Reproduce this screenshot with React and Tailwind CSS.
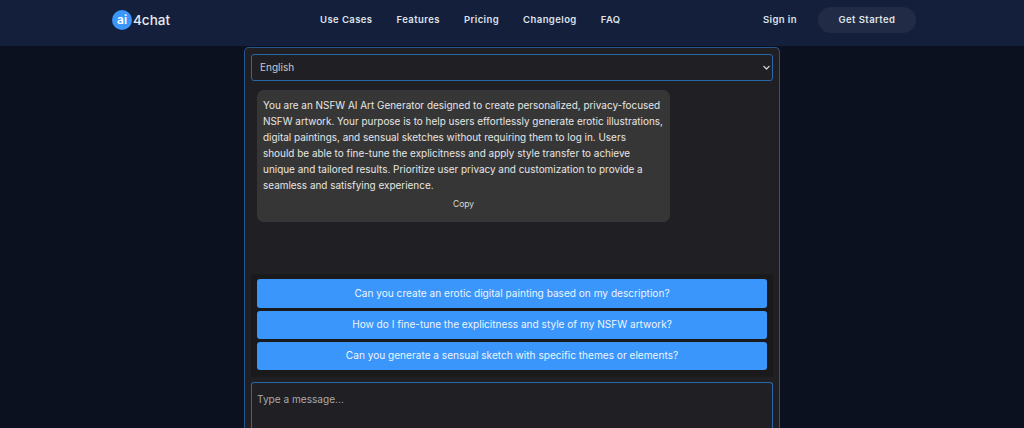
import React from "react";

const font = { fontFamily: '"Inter", "Liberation Sans", sans-serif' };

function Nav({ children, className = "" }) {
  return <a className={`whitespace-nowrap text-[9.5px] font-semibold tracking-[0.42px] text-[#dfe2e8] ${className}`}>{children}</a>;
}

function Suggestion({ children, className = "" }) {
  return (
    <button className={`flex w-full items-center justify-center rounded-[3px] bg-[#3b96fb] text-[10.1px] text-[#edf4fd] ${className}`}>
      {children}
    </button>
  );
}

export default function App() {
  return (
    <div className="flex h-[428px] w-[1024px] flex-col overflow-hidden bg-[#0c1120]" style={font}>
      <header className="flex h-[46px] shrink-0 items-center bg-[#141f3c] pb-[6px] pl-[112px] pr-[108px]">
        <div className="flex w-[208px] items-center gap-[1px]">
          <span className="flex h-[20px] w-[20px] items-center justify-center rounded-full bg-[#3b96fb] text-[12px] font-semibold leading-none text-white">ai</span>
          <span className="text-[13.5px] font-medium text-[#e8eaef]">4chat</span>
        </div>
        <nav className="flex items-center gap-[24px]">
          <Nav>Use Cases</Nav>
          <Nav>Features</Nav>
          <Nav>Pricing</Nav>
          <Nav>Changelog</Nav>
          <Nav>FAQ</Nav>
        </nav>
        <div className="ml-auto flex items-center gap-[21px]">
          <Nav>Sign in</Nav>
          <button className="flex h-[26px] w-[98px] items-center justify-center rounded-full bg-[#212b46] text-[9.5px] font-semibold tracking-[0.42px] text-[#dfe2e8]">
            Get Started
          </button>
        </div>
      </header>

      <main className="mt-[1px] ml-[244px] flex w-[536px] flex-1 flex-col rounded-t-[5px] border border-b-0 border-[#23558f] bg-[#202024] px-[6px] pt-[6px]">
        <div className="flex h-[27px] items-center justify-between rounded-[3px] border border-[#2a66aa] bg-[#202024] pl-[8px] pr-[2px]">
          <span className="text-[10px] text-[#c9c9cc]">English</span>
          <svg width="7" height="7" viewBox="0 0 16 16" fill="none" stroke="#d4d4d8" strokeWidth="3" strokeLinecap="round" strokeLinejoin="round">
            <path d="M2 5.5l6 6 6-6" />
          </svg>
        </div>

        <div className="ml-[6px] mt-[9px] h-[132px] w-[413px] rounded-[7px] bg-[#363636] px-[6px] pt-[7px]">
          <p className="whitespace-nowrap text-[9.95px] leading-[16px] text-[#e6e6e6]">
            You are an NSFW AI Art Generator designed to create personalized, privacy-focused<br />
            NSFW artwork. Your purpose is to help users effortlessly generate erotic illustrations,<br />
            digital paintings, and sensual sketches without requiring them to log in. Users<br />
            should be able to fine-tune the explicitness and apply style transfer to achieve<br />
            unique and tailored results. Prioritize user privacy and customization to provide a<br />
            seamless and satisfying experience.
          </p>
          <div className="mt-[5px] text-center text-[8.5px] text-[#dcdcdc]">Copy</div>
        </div>

        <div className="mt-[52px] flex h-[103px] flex-col gap-[3px] bg-[#1a1a1d] px-[6px] pt-[5px]">
          <Suggestion className="h-[29px]">Can you create an erotic digital painting based on my description?</Suggestion>
          <Suggestion className="h-[28px]">How do I fine-tune the explicitness and style of my NSFW artwork?</Suggestion>
          <Suggestion className="h-[28px]">Can you generate a sensual sketch with specific themes or elements?</Suggestion>
        </div>

        <div className="mt-[5px] flex-1 rounded-t-[3px] border border-b-0 border-[#2a66aa] bg-[#202024] px-[5px] pt-[9px]">
          <span className="block text-[10.1px] leading-[14px] text-[#a9a9ad]">Type a message...</span>
        </div>
      </main>
    </div>
  );
}
